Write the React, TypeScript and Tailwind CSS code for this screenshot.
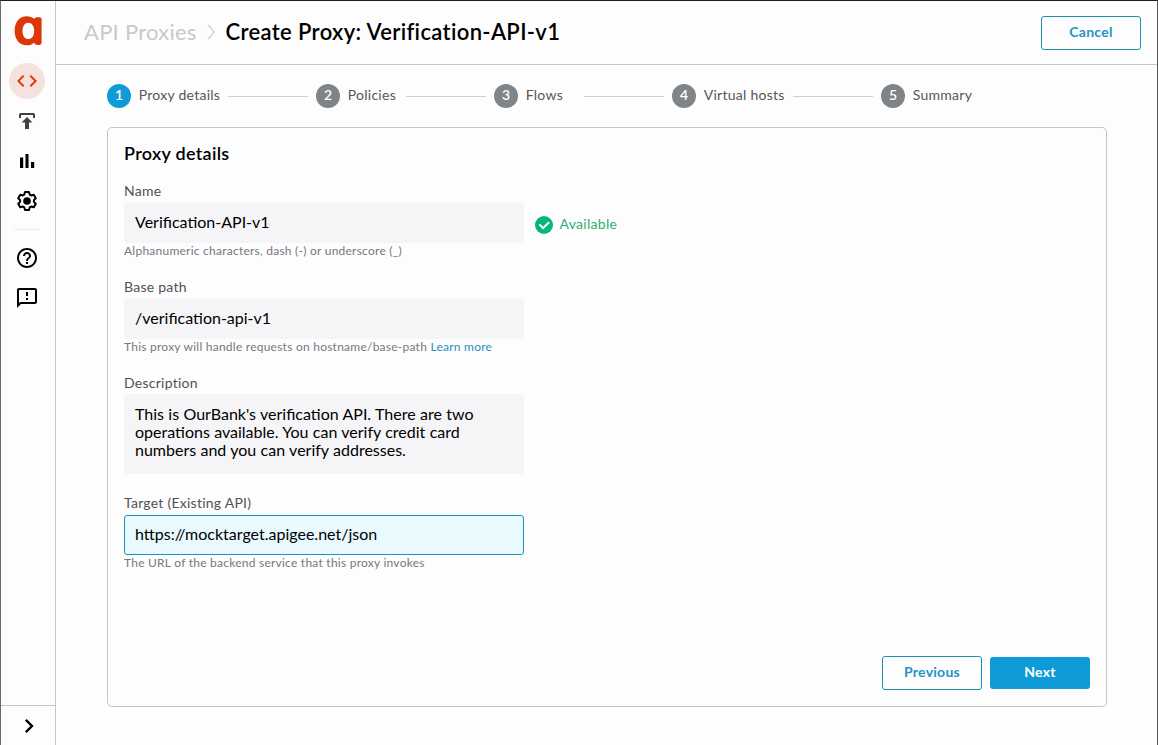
import type { ReactNode } from "react";
import { MdChevronRight, MdCode, MdHelpOutline, MdOutlineFeedback } from "react-icons/md";

function Logo() {
  return (
    <svg viewBox="0 0 28 30" className="h-[30px] w-7" fill="#dd3608">
      <path
        fillRule="evenodd"
        d="M12.800 0.200C15.800 0.200 18.500 1.100 20.300 3C20.600 1.800 21.800 1.200 23.200 1.200H25.500C27 1.200 27.600 2 27.600 3.400V26.400C27.600 28 26.700 28.900 25 28.900H24C21.800 28.900 20.600 28.200 20.200 26.400C18.300 28.400 15.700 29.200 12.800 29.200C5.300 29.200 0.600 23.200 0.600 14.700C0.600 6.200 5.300 0.200 12.800 0.200ZM14.300 6.700C10.900 6.700 8.500 10.100 8.500 14.900C8.500 19.700 10.900 23.100 14.300 23.100C17.700 23.100 20.200 19.700 20.200 14.900C20.200 10.100 17.700 6.700 14.300 6.700Z"
      />
    </svg>
  );
}

function DeployIcon() {
  return (
    <svg viewBox="0 0 24 24" className="size-6" fill="#424242">
      <path d="M5.500 4H18.500Q20 4 20 5.500V9H18V6H6V9H4V5.500Q4 4 5.500 4Z" />
      <path d="M12 8L17.500 13.500H14V20H10V13.500H6.500Z" />
    </svg>
  );
}

function ChartIcon() {
  return (
    <svg viewBox="0 0 24 24" className="size-6" fill="#000">
      <path d="M5 8.500H8.200V19H5ZM10.500 5H13.500V19H10.500ZM16 13H19.200V19H16Z" />
    </svg>
  );
}

const gearPoints = [0, 60, 120, 180, 240, 300]
  .flatMap((deg) => {
    const a = (deg * Math.PI) / 180;
    return [[-2.7, -6.4], [-2, -9], [2, -9], [2.7, -6.4]].map(
      ([x, y]) => `${(12 + x * Math.cos(a) - y * Math.sin(a)).toFixed(2)},${(12 + x * Math.sin(a) + y * Math.cos(a)).toFixed(2)}`,
    );
  })
  .join(" ");

function GearIcon() {
  return (
    <svg viewBox="0 0 24 24" className="size-6">
      <polygon points={gearPoints} fill="none" stroke="#000" strokeWidth="2" strokeLinejoin="round" />
      <circle cx="12" cy="12" r="3.8" fill="#000" />
    </svg>
  );
}

function NavItem({ active, children }: { active?: boolean; children: ReactNode }) {
  return (
    <a className="flex h-10 items-center justify-center">
      <span className={active ? "flex size-9 items-center justify-center rounded-full bg-[#f5e2de] text-[#e03a0b]" : "flex size-9 items-center justify-center"}>
        {children}
      </span>
    </a>
  );
}

function Sidebar() {
  return (
    <aside className="flex w-[55px] shrink-0 flex-col border-r border-[#c5c5c9] text-black">
      <div className="flex h-[60px] items-start pt-[15px] pl-[13px]">
        <Logo />
      </div>
      <nav className="w-[52px]">
        <NavItem active><MdCode size={24} /></NavItem>
        <NavItem><DeployIcon /></NavItem>
        <NavItem><ChartIcon /></NavItem>
        <NavItem><GearIcon /></NavItem>
        <div className="mx-auto mt-2 mb-2 h-px w-[26px] bg-[#ececee]" />
        <NavItem><MdHelpOutline size={24} /></NavItem>
        <NavItem><MdOutlineFeedback size={24} /></NavItem>
      </nav>
      <div className="mt-auto flex h-10 items-center border-t border-[#c5c5c9] pl-3.5">
        <MdChevronRight size={28} />
      </div>
    </aside>
  );
}

const steps = [
  { label: "Proxy details", width: "w-[209px]" },
  { label: "Policies", width: "w-[178px]" },
  { label: "Flows", width: "w-[178px]" },
  { label: "Virtual hosts", width: "w-[209px]" },
  { label: "Summary", width: "w-[120px]" },
];

function Stepper() {
  return (
    <ol className="flex h-6">
      {steps.map((step, i) => (
        <li key={step.label} className={`flex items-center ${step.width}`}>
          <span className={`flex size-6 items-center justify-center rounded-full pb-0.5 text-sm font-semibold text-white ${i === 0 ? "bg-[#0f9bd7]" : "bg-[#808487]"}`}>
            {i + 1}
          </span>
          <span className="ml-[7.75px] pb-0.5 text-sm tracking-[0.26px] text-[#55565a]">{step.label}</span>
          {i < steps.length - 1 && <span className="mr-2 ml-auto h-px w-20 bg-[#cfcfd2]" />}
        </li>
      ))}
    </ol>
  );
}

function Field({ label, help, className, children }: { label: string; help?: ReactNode; className: string; children: ReactNode }) {
  return (
    <div className={`flex flex-col ${className}`}>
      <label className="h-6 text-sm leading-6 tracking-[0.25px] text-[#505155]">{label}</label>
      {children}
      {help && <p className="text-xs leading-4 tracking-[0.24px] text-[#77787c]">{help}</p>}
    </div>
  );
}

const box = "block w-[400px] rounded-[3px] bg-[#f5f5f7] px-[11px] text-base text-black outline-none";

export default function App() {
  return (
    <div className="flex h-[745px] w-[1158px] border-t border-r border-l border-t-[#221d22] border-r-[#5b595c] border-l-[#6b6b6b] bg-[#fdfdfe] font-['Lato',sans-serif]">
      <Sidebar />
      <div className="flex min-w-0 flex-1 flex-col">
        <header className="flex h-16 items-center border-b border-[#c5c5c9] pr-4 pl-7">
          <h1 className="flex items-center pb-0.5 text-[22px] leading-7 whitespace-nowrap">
            <span className="w-28 font-normal tracking-[0.25px] text-[#c9c9c9]">API Proxies</span>
            <svg viewBox="0 0 8 16" className="mt-px mr-[10.5px] ml-[11px] h-4 w-2" fill="none" stroke="#b5b5b8">
              <path d="M1 0.500L7 8L1 15.500" />
            </svg>
            <span className="font-semibold tracking-[0.35px] text-black">Create Proxy: Verification-API-v1</span>
          </h1>
          <button className="ml-auto h-[34px] w-[100px] rounded-[3px] border border-[#1e93b8] pb-0.5 text-sm font-bold tracking-[0.25px] text-[#2394c4]">Cancel</button>
        </header>
        <main className="flex flex-col pt-[19px] pl-[51px]">
          <Stepper />
          <section className="mt-[19px] flex h-[580px] w-[1000px] flex-col rounded-[5px] border border-[#c5c5c9] px-4 pt-[13px] pb-4">
            <h2 className="h-[38px] text-lg leading-6 font-semibold tracking-[0.3px] text-black">Proxy details</h2>
            <Field label="Name" className="h-24" help="Alphanumeric characters, dash (-) or underscore (_)">
              <div className="flex items-center">
                <input className={`${box} h-10 pb-1`} defaultValue="Verification-API-v1" />
                <svg viewBox="0 0 18 18" className="mt-1 ml-[11px] size-[18px]">
                  <circle cx="9" cy="9" r="9" fill="#04b875" />
                  <path d="M4.300 8.400L8 12L14.200 6.300" fill="none" stroke="#fff" strokeWidth="2" />
                </svg>
                <span className="mt-0.5 ml-[6.5px] text-sm tracking-[0.3px] text-[#31ad75]">Available</span>
              </div>
            </Field>
            <Field
              label="Base path"
              className="h-24"
              help={<>This proxy will handle requests on hostname/base-path <a className="text-[#2a8fbd]">Learn more</a></>}
            >
              <input className={`${box} h-10 pb-1`} defaultValue="/verification-api-v1" />
            </Field>
            <Field label="Description" className="h-[120px]">
              <textarea
                className={`${box} -mt-px h-20 resize-none overflow-hidden pt-[11px] leading-[18px] [word-spacing:0.25px]`}
                defaultValue="This is OurBank's verification API. There are two operations available. You can verify credit card numbers and you can verify addresses."
              />
            </Field>
            <Field label="Target (Existing API)" className="h-24" help="The URL of the backend service that this proxy invokes">
              <input className="block h-10 w-[400px] rounded-[3px] border border-[#1e93b8] bg-[#e8fafe] px-2.5 pb-1 text-base text-black outline-none" defaultValue="https://mocktarget.apigee.net/json" />
            </Field>
            <div className="mt-auto flex items-center justify-end gap-2">
              <button className="h-[34px] w-[100px] rounded-[3px] border border-[#1e93b8] pb-0.5 text-sm font-bold tracking-[0.25px] text-[#2394c4]">Previous</button>
              <button className="h-8 w-[100px] rounded-[3px] bg-[#0f9bd7] pb-0.5 text-sm font-bold tracking-[0.25px] text-white">Next</button>
            </div>
          </section>
        </main>
      </div>
    </div>
  );
}
